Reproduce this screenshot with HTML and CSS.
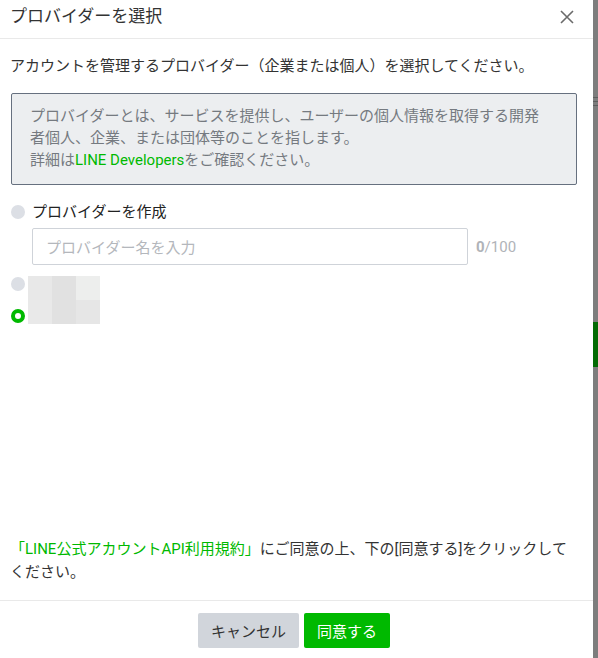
FILE: index.html
```html
<!DOCTYPE html>
<html lang="ja">
<head>
<meta charset="utf-8">
<link rel="stylesheet" href="styles.css">
</head>
<body>
<div class="page">
  <div class="modal">
    <div class="header">
      <div class="title">プロバイダーを選択</div>
      <div class="close"><svg width="14" height="14" viewBox="0 0 14 14"><path d="M1 1L13 13M13 1L1 13" stroke="#6b6b6b" stroke-width="1.6" fill="none"/></svg></div>
    </div>
    <div class="body">
      <p class="desc">アカウントを管理するプロバイダー（企業または個人）を選択してください。</p>
      <div class="info">プロバイダーとは、サービスを提供し、ユーザーの個人情報を取得する開発<br>者個人、企業、または団体等のことを指します。<br>詳細は<span class="link">LINE Developers</span>をご確認ください。</div>
      <div class="opt">
        <span class="radio"></span>
        <span class="label">プロバイダーを作成</span>
      </div>
      <div class="inputrow">
        <div class="input">プロバイダー名を入力</div>
        <div class="count"><b>0</b>/100</div>
      </div>
      <div class="existing">
        <div class="radios">
          <span class="radio"></span>
          <span class="radio on"></span>
        </div>
        <div class="mosaic">
          <i class="m1"></i><i class="m2"></i><i class="m3"></i>
          <i class="m4"></i><i class="m2"></i><i class="m5"></i>
        </div>
      </div>
      <div class="spacer"></div>
      <p class="agree"><span class="link">「LINE公式アカウントAPI利用規約」</span>にご同意の上、下の[同意する]をクリックして<br>ください。</p>
    </div>
    <div class="footer">
      <button class="btn cancel">キャンセル</button>
      <button class="btn ok">同意する</button>
    </div>
  </div>
  <div class="backdrop">
    <div class="marks"><i></i><i></i><i></i></div>
    <div class="greenbar"></div>
  </div>
</div>
</body>
</html>
```
FILE: styles.css
```css
* { box-sizing: border-box; }
html, body { margin: 0; padding: 0; }
body {
  font-family: Roboto, "Noto Sans CJK JP", sans-serif;
  color: #333;
  background: #fff;
}
.page {
  display: flex;
  width: 598px;
  height: 658px;
}
.modal {
  width: 593px;
  height: 658px;
  display: flex;
  flex-direction: column;
  background: #fff;
}
.header {
  height: 39px;
  border-bottom: 1px solid #e9e9e9;
  display: flex;
  align-items: center;
  justify-content: space-between;
  padding: 0 19px 6px 10px;
}
.title {
  font-size: 17px;
  line-height: 22px;
  color: #333;
}
.close { display: flex; padding-top: 2px; }
.body {
  flex: 1;
  display: flex;
  flex-direction: column;
}
.desc {
  margin: 17px 0 0 10px;
  font-size: 15px;
  line-height: 20px;
  color: #333;
}
.info {
  margin: 17px 16px 0 11px;
  background: #eceef0;
  border: 1px solid #66707f;
  border-radius: 2px;
  padding: 11px 18px 13px 18px;
  font-size: 15px;
  line-height: 22px;
  color: #757a80;
}
.link { color: #00b900; }
.opt {
  display: flex;
  align-items: center;
  margin: 17px 0 0 11px;
  height: 20px;
}
.radio {
  width: 14px;
  height: 14px;
  border-radius: 50%;
  background: #dcdfe5;
  display: block;
  flex: none;
}
.radio.on {
  background: #fff;
  border: 4.5px solid #00b900;
}
.label {
  margin-left: 7px;
  font-size: 15px;
  line-height: 20px;
  color: #222;
}
.inputrow {
  display: flex;
  align-items: center;
  margin: 6px 0 0 32px;
}
.input {
  width: 436px;
  height: 37px;
  border: 1px solid #cfd3d9;
  border-radius: 2px;
  padding: 0 13px;
  display: flex;
  align-items: center;
  font-size: 15px;
  color: #b4b7bc;
}
.count {
  margin-left: 8px;
  font-size: 15px;
  color: #b0b3b8;
}
.count b { font-weight: 700; }
.existing {
  display: flex;
  margin: 11px 0 0 11px;
}
.radios {
  display: flex;
  flex-direction: column;
  gap: 18px;
  padding-top: 1px;
}
.mosaic {
  margin-left: 3px;
  display: grid;
  grid-template-columns: repeat(3, 24px);
  grid-template-rows: repeat(2, 24px);
}
.mosaic i { display: block; }
.m1 { background: #e8e8e8; }
.m2 { background: #e1e1e1; }
.m3 { background: #edeeed; }
.m4 { background: #e9e9e9; }
.m5 { background: #e6e6e6; }
.spacer { flex: 1; }
.agree {
  margin: 0 8px 16px 10px;
  font-size: 15px;
  line-height: 23px;
  color: #333;
  white-space: nowrap;
}
.footer {
  height: 58px;
  border-top: 1px solid #e9e9e9;
  display: flex;
  justify-content: center;
  gap: 5px;
  padding-top: 12px;
  padding-right: 5px;
}
.btn {
  height: 35px;
  border: none;
  border-radius: 2px;
  font-family: Roboto, "Noto Sans CJK JP", sans-serif;
  font-size: 15px;
  padding: 0;
}
.cancel { background: #d1d5db; color: #333; width: 101px; }
.ok { background: #00b900; color: #fff; width: 86px; }
.backdrop {
  width: 5px;
  height: 658px;
  background: #7d7d7d;
  display: flex;
  flex-direction: column;
}
.marks {
  margin-top: 97px;
  display: flex;
  flex-direction: column;
  gap: 3px;
}
.marks i { display: block; height: 1px; background: #5e5e5e; }
.greenbar {
  margin-top: 216px;
  height: 45px;
  background: #046b04;
}
```
